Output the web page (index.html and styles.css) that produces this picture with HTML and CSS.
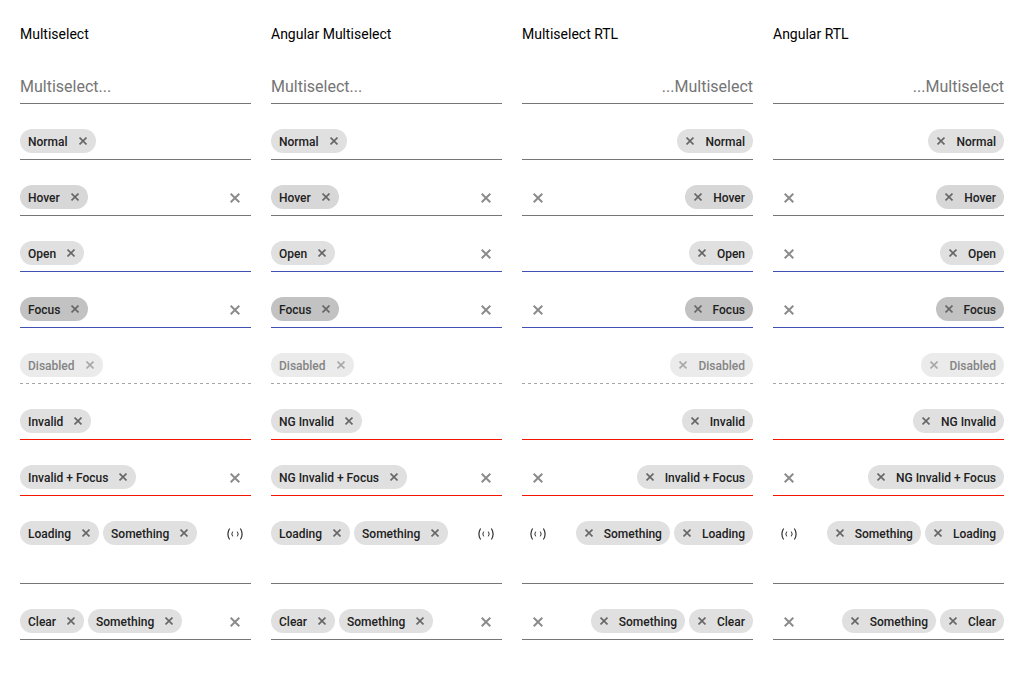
FILE: index.html
```html
<!DOCTYPE html>
<html lang="en">
<head>
<meta charset="utf-8">
<title>Multiselect</title>
<link rel="stylesheet" href="styles.css">
</head>
<body>
<svg class="sprite" aria-hidden="true">
  <symbol id="x" viewBox="0 0 10 10"><path d="M.7.7 9.3 9.3M9.3.7.7 9.3" fill="none" stroke="currentColor" stroke-width="2"/></symbol>
  <symbol id="load" viewBox="0 0 16 12"><path d="M2.6.5Q-.8 6 2.6 11.5M13.4.5Q16.8 6 13.4 11.5" fill="none" stroke="currentColor" stroke-width="1.2"/><path d="M5.7 3.6Q3.9 6 5.7 8.4M10.3 3.6Q12.1 6 10.3 8.4" fill="none" stroke="currentColor"/></symbol>
</svg>
<main class="board">
  <section class="column">
    <h2 class="title">Multiselect</h2>
    <div class="field"><input class="entry" type="text" placeholder="Multiselect..." aria-label="Multiselect"></div>
    <div class="field"><span class="chip">Normal<button class="remove" aria-label="Remove Normal"><svg><use href="#x"/></svg></button></span><input class="entry" type="text" aria-label="Normal"></div>
    <div class="field"><span class="chip hover">Hover<button class="remove" aria-label="Remove Hover"><svg><use href="#x"/></svg></button></span><input class="entry" type="text" aria-label="Hover"><button class="clear" aria-label="Clear"><svg><use href="#x"/></svg></button></div>
    <div class="field active"><span class="chip">Open<button class="remove" aria-label="Remove Open"><svg><use href="#x"/></svg></button></span><input class="entry" type="text" aria-label="Open"></div>
    <div class="field active"><span class="chip focus">Focus<button class="remove" aria-label="Remove Focus"><svg><use href="#x"/></svg></button></span><input class="entry" type="text" aria-label="Focus"><button class="clear" aria-label="Clear"><svg><use href="#x"/></svg></button></div>
    <div class="field disabled"><span class="chip">Disabled<button class="remove" disabled aria-label="Remove Disabled"><svg><use href="#x"/></svg></button></span><input class="entry" type="text" disabled aria-label="Disabled"></div>
    <div class="field invalid"><span class="chip">Invalid<button class="remove" aria-label="Remove Invalid"><svg><use href="#x"/></svg></button></span><input class="entry" type="text" aria-label="Invalid"></div>
    <div class="field invalid"><span class="chip">Invalid + Focus<button class="remove" aria-label="Remove Invalid + Focus"><svg><use href="#x"/></svg></button></span><input class="entry" type="text" aria-label="Invalid + Focus"><button class="clear" aria-label="Clear"><svg><use href="#x"/></svg></button></div>
    <div class="field"><span class="chip">Loading<button class="remove" aria-label="Remove Loading"><svg><use href="#x"/></svg></button></span><span class="chip">Something<button class="remove" aria-label="Remove Something"><svg><use href="#x"/></svg></button></span><input class="entry" type="text" aria-label="Loading"><svg class="loader"><use href="#load"/></svg></div>
    <div class="field"><span class="chip">Clear<button class="remove" aria-label="Remove Clear"><svg><use href="#x"/></svg></button></span><span class="chip">Something<button class="remove" aria-label="Remove Something"><svg><use href="#x"/></svg></button></span><input class="entry" type="text" aria-label="Clear"><button class="clear" aria-label="Clear"><svg><use href="#x"/></svg></button></div>
  </section>
  <section class="column">
    <h2 class="title">Angular Multiselect</h2>
    <div class="field"><input class="entry" type="text" placeholder="Multiselect..." aria-label="Multiselect"></div>
    <div class="field"><span class="chip">Normal<button class="remove" aria-label="Remove Normal"><svg><use href="#x"/></svg></button></span><input class="entry" type="text" aria-label="Normal"></div>
    <div class="field"><span class="chip hover">Hover<button class="remove" aria-label="Remove Hover"><svg><use href="#x"/></svg></button></span><input class="entry" type="text" aria-label="Hover"><button class="clear" aria-label="Clear"><svg><use href="#x"/></svg></button></div>
    <div class="field active"><span class="chip">Open<button class="remove" aria-label="Remove Open"><svg><use href="#x"/></svg></button></span><input class="entry" type="text" aria-label="Open"><button class="clear" aria-label="Clear"><svg><use href="#x"/></svg></button></div>
    <div class="field active"><span class="chip focus">Focus<button class="remove" aria-label="Remove Focus"><svg><use href="#x"/></svg></button></span><input class="entry" type="text" aria-label="Focus"><button class="clear" aria-label="Clear"><svg><use href="#x"/></svg></button></div>
    <div class="field disabled"><span class="chip">Disabled<button class="remove" disabled aria-label="Remove Disabled"><svg><use href="#x"/></svg></button></span><input class="entry" type="text" disabled aria-label="Disabled"></div>
    <div class="field invalid"><span class="chip">NG Invalid<button class="remove" aria-label="Remove NG Invalid"><svg><use href="#x"/></svg></button></span><input class="entry" type="text" aria-label="NG Invalid"></div>
    <div class="field invalid"><span class="chip">NG Invalid + Focus<button class="remove" aria-label="Remove NG Invalid + Focus"><svg><use href="#x"/></svg></button></span><input class="entry" type="text" aria-label="NG Invalid + Focus"><button class="clear" aria-label="Clear"><svg><use href="#x"/></svg></button></div>
    <div class="field"><span class="chip">Loading<button class="remove" aria-label="Remove Loading"><svg><use href="#x"/></svg></button></span><span class="chip">Something<button class="remove" aria-label="Remove Something"><svg><use href="#x"/></svg></button></span><input class="entry" type="text" aria-label="Loading"><svg class="loader"><use href="#load"/></svg></div>
    <div class="field"><span class="chip">Clear<button class="remove" aria-label="Remove Clear"><svg><use href="#x"/></svg></button></span><span class="chip">Something<button class="remove" aria-label="Remove Something"><svg><use href="#x"/></svg></button></span><input class="entry" type="text" aria-label="Clear"><button class="clear" aria-label="Clear"><svg><use href="#x"/></svg></button></div>
  </section>
  <section class="column">
    <h2 class="title">Multiselect RTL</h2>
    <div class="field" dir="rtl"><input class="entry" type="text" placeholder="Multiselect..." aria-label="Multiselect"></div>
    <div class="field" dir="rtl"><span class="chip">Normal<button class="remove" aria-label="Remove Normal"><svg><use href="#x"/></svg></button></span><input class="entry" type="text" aria-label="Normal"></div>
    <div class="field" dir="rtl"><span class="chip hover">Hover<button class="remove" aria-label="Remove Hover"><svg><use href="#x"/></svg></button></span><input class="entry" type="text" aria-label="Hover"><button class="clear" aria-label="Clear"><svg><use href="#x"/></svg></button></div>
    <div class="field active" dir="rtl"><span class="chip">Open<button class="remove" aria-label="Remove Open"><svg><use href="#x"/></svg></button></span><input class="entry" type="text" aria-label="Open"></div>
    <div class="field active" dir="rtl"><span class="chip focus">Focus<button class="remove" aria-label="Remove Focus"><svg><use href="#x"/></svg></button></span><input class="entry" type="text" aria-label="Focus"><button class="clear" aria-label="Clear"><svg><use href="#x"/></svg></button></div>
    <div class="field disabled" dir="rtl"><span class="chip">Disabled<button class="remove" disabled aria-label="Remove Disabled"><svg><use href="#x"/></svg></button></span><input class="entry" type="text" disabled aria-label="Disabled"></div>
    <div class="field invalid" dir="rtl"><span class="chip">Invalid<button class="remove" aria-label="Remove Invalid"><svg><use href="#x"/></svg></button></span><input class="entry" type="text" aria-label="Invalid"></div>
    <div class="field invalid" dir="rtl"><span class="chip">Invalid + Focus<button class="remove" aria-label="Remove Invalid + Focus"><svg><use href="#x"/></svg></button></span><input class="entry" type="text" aria-label="Invalid + Focus"><button class="clear" aria-label="Clear"><svg><use href="#x"/></svg></button></div>
    <div class="field" dir="rtl"><span class="chip">Loading<button class="remove" aria-label="Remove Loading"><svg><use href="#x"/></svg></button></span><span class="chip">Something<button class="remove" aria-label="Remove Something"><svg><use href="#x"/></svg></button></span><input class="entry" type="text" aria-label="Loading"><svg class="loader"><use href="#load"/></svg></div>
    <div class="field" dir="rtl"><span class="chip">Clear<button class="remove" aria-label="Remove Clear"><svg><use href="#x"/></svg></button></span><span class="chip">Something<button class="remove" aria-label="Remove Something"><svg><use href="#x"/></svg></button></span><input class="entry" type="text" aria-label="Clear"><button class="clear" aria-label="Clear"><svg><use href="#x"/></svg></button></div>
  </section>
  <section class="column">
    <h2 class="title">Angular RTL</h2>
    <div class="field" dir="rtl"><input class="entry" type="text" placeholder="Multiselect..." aria-label="Multiselect"></div>
    <div class="field" dir="rtl"><span class="chip">Normal<button class="remove" aria-label="Remove Normal"><svg><use href="#x"/></svg></button></span><input class="entry" type="text" aria-label="Normal"></div>
    <div class="field" dir="rtl"><span class="chip hover">Hover<button class="remove" aria-label="Remove Hover"><svg><use href="#x"/></svg></button></span><input class="entry" type="text" aria-label="Hover"><button class="clear" aria-label="Clear"><svg><use href="#x"/></svg></button></div>
    <div class="field active" dir="rtl"><span class="chip">Open<button class="remove" aria-label="Remove Open"><svg><use href="#x"/></svg></button></span><input class="entry" type="text" aria-label="Open"><button class="clear" aria-label="Clear"><svg><use href="#x"/></svg></button></div>
    <div class="field active" dir="rtl"><span class="chip focus">Focus<button class="remove" aria-label="Remove Focus"><svg><use href="#x"/></svg></button></span><input class="entry" type="text" aria-label="Focus"><button class="clear" aria-label="Clear"><svg><use href="#x"/></svg></button></div>
    <div class="field disabled" dir="rtl"><span class="chip">Disabled<button class="remove" disabled aria-label="Remove Disabled"><svg><use href="#x"/></svg></button></span><input class="entry" type="text" disabled aria-label="Disabled"></div>
    <div class="field invalid" dir="rtl"><span class="chip">NG Invalid<button class="remove" aria-label="Remove NG Invalid"><svg><use href="#x"/></svg></button></span><input class="entry" type="text" aria-label="NG Invalid"></div>
    <div class="field invalid" dir="rtl"><span class="chip">NG Invalid + Focus<button class="remove" aria-label="Remove NG Invalid + Focus"><svg><use href="#x"/></svg></button></span><input class="entry" type="text" aria-label="NG Invalid + Focus"><button class="clear" aria-label="Clear"><svg><use href="#x"/></svg></button></div>
    <div class="field" dir="rtl"><span class="chip">Loading<button class="remove" aria-label="Remove Loading"><svg><use href="#x"/></svg></button></span><span class="chip">Something<button class="remove" aria-label="Remove Something"><svg><use href="#x"/></svg></button></span><input class="entry" type="text" aria-label="Loading"><svg class="loader"><use href="#load"/></svg></div>
    <div class="field" dir="rtl"><span class="chip">Clear<button class="remove" aria-label="Remove Clear"><svg><use href="#x"/></svg></button></span><span class="chip">Something<button class="remove" aria-label="Remove Something"><svg><use href="#x"/></svg></button></span><input class="entry" type="text" aria-label="Clear"><button class="clear" aria-label="Clear"><svg><use href="#x"/></svg></button></div>
  </section>
</main>
</body>
</html>
```
FILE: styles.css
```css
* { box-sizing: border-box; }
body {
  margin: 0;
  background: #fff;
  color: #000;
  font-family: Roboto, sans-serif;
  font-size: 14px;
}
.sprite { display: none; }
.board {
  display: grid;
  grid-template-columns: repeat(4, minmax(0, 1fr));
  gap: 20px;
  padding: 24px 20px;
}
.column {
  display: flex;
  flex-direction: column;
  gap: 20px;
}
.title {
  margin: 0 0 4px;
  font-size: 14px;
  font-weight: 400;
  line-height: 20px;
}
.field {
  position: relative;
  display: flex;
  flex-wrap: wrap;
  align-items: center;
  gap: 8px 4px;
  padding: 5px 0 6px;
  padding-inline-end: 32px;
  border-bottom: 1px solid #767676;
}
.active { border-bottom-color: #3f51b5; }
.invalid { border-bottom-color: #f31700; }
.disabled {
  border-bottom: 0;
  padding-bottom: 7px;
  background: repeating-linear-gradient(90deg, #a6a6a6 0 3px, transparent 3px 6px) left bottom / 100% 1px no-repeat;
}
.entry {
  flex: 1 1 24px;
  width: 24px;
  min-width: 0;
  height: 24px;
  padding: 2px 0 0;
  border: 0;
  outline: 0;
  background: transparent;
  color: #212121;
  font: 16px Roboto, sans-serif;
}
.entry::placeholder { color: #757575; opacity: 1; }
.chip {
  display: flex;
  align-items: flex-start;
  gap: 2px;
  height: 24px;
  padding-inline-start: 8px;
  border-radius: 12px;
  background: #e0e0e0;
  color: #212121;
  font-size: 12px;
  font-weight: 500;
  line-height: 26px;
  white-space: nowrap;
}
.chip.hover { background: #d7d7d7; }
.chip.focus { background: #c2c2c2; }
.disabled .chip { background: #ebebeb; color: #848484; }
.remove {
  display: flex;
  justify-content: center;
  align-items: center;
  width: 26px;
  height: 24px;
  padding: 0;
  border: 0;
  background: none;
  color: #666;
}
.remove svg { width: 8px; height: 8px; }
.disabled .remove { color: #a8a8a8; }
.clear,
.loader {
  position: absolute;
  inset-inline-end: 0;
  top: 6px;
  width: 32px;
  height: 24px;
}
.clear {
  display: flex;
  justify-content: center;
  align-items: center;
  padding: 0;
  border: 0;
  background: none;
  color: #8c8c8c;
}
.clear svg { width: 10px; height: 10px; }
.loader { padding: 6px 8px; color: #333; }
```
